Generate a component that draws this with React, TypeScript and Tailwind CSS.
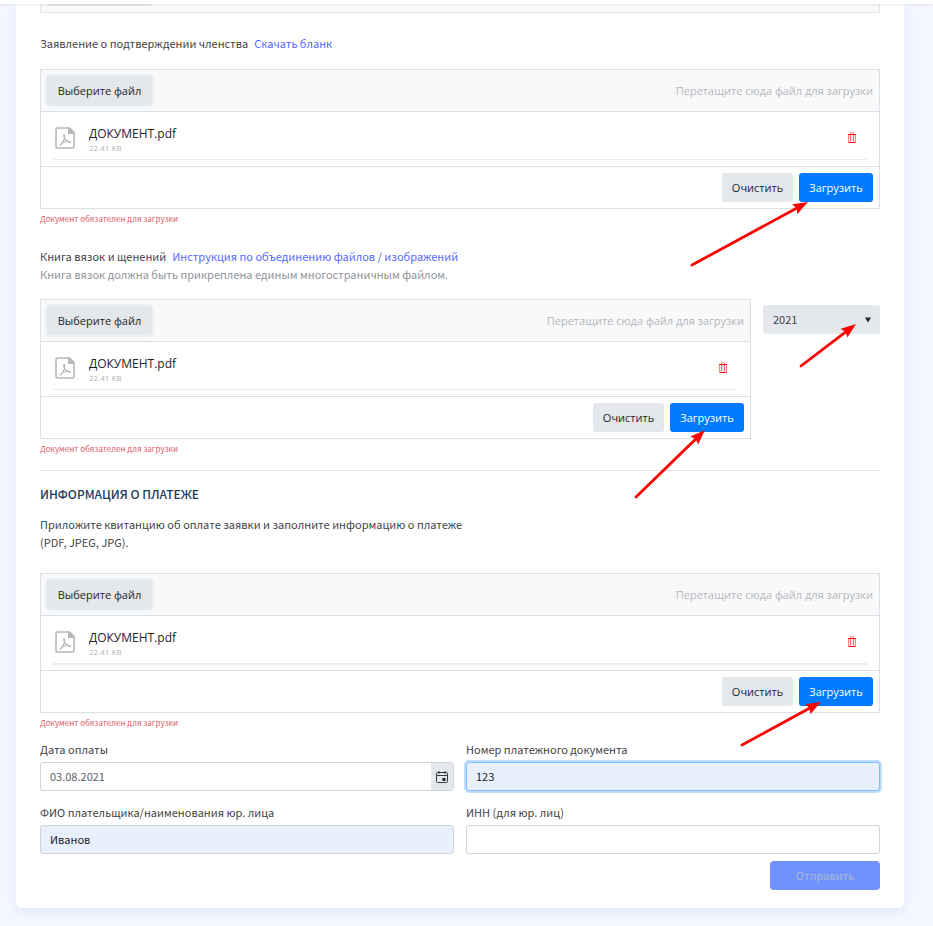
import { useRef, useState } from 'react';
import type { ReactNode } from 'react';

function PdfIcon() {
  return (
    <svg width="20" height="22" viewBox="0 0 20 22" fill="none" stroke="#b5b7ba">
      <path d="M13.500 1H2.500A1.500 1.500 0 0 0 1 2.500v17A1.500 1.500 0 0 0 2.500 21h15a1.500 1.500 0 0 0 1.500-1.500V6" strokeWidth="1.600" />
      <path d="M13 .2h1.800L19.800 5v2H13z" fill="#b5b7ba" stroke="none" />
      <path d="M8.800 7.700c1.300 0 1 1.400.7 3-.7 3-2.600 6.300-4.300 7.200 1.200-1.700 3.500-3 6-3.400 1.700-.3 3.600-.3 4.500.8-2.600-.1-6-2-6.600-5-.2-1-.7-2.400-.3-2.600z" strokeWidth="1.200" strokeLinejoin="round" />
    </svg>
  );
}

function TrashIcon() {
  return (
    <svg width="8" height="11" viewBox="0 0 8 11" fill="none">
      <path d="M1 3h6v7.500H1z" fill="#ffe0e4" />
      <path d="M2.500 2V.500h3V2" stroke="#ff9090" />
      <path d="M.5 3v7M7.500 3v7" stroke="#ff8a70" />
      <path d="M2.500 3v6M5.500 3v6" stroke="#ff6a90" />
      <path d="M0 2.500h8M.5 10.500h7" stroke="#ff0010" />
    </svg>
  );
}

function CalendarIcon() {
  return (
    <svg width="12" height="12" viewBox="0 0 12 12" fill="none" stroke="#343a40">
      <rect x=".5" y="1.500" width="11" height="10" rx="1" />
      <path d="M.5 4.500h11M3 0v3M9 0v3" />
      <rect x="6.500" y="7" width="3" height="3" fill="#212529" stroke="none" />
    </svg>
  );
}

interface ArrowProps {
  width: number;
  height: number;
  className: string;
}

// points from the bottom left corner of its box to the top right one
function Arrow({ width, height, className }: ArrowProps) {
  const angle = (Math.atan2(-height, width) * 180) / Math.PI;
  const length = Math.hypot(width, height);
  return (
    <svg
      width={width}
      height={height}
      aria-hidden="true"
      className={`pointer-events-none absolute overflow-visible ${className}`}
    >
      <g transform={`translate(${width} 0) rotate(${angle})`}>
        <line x1={-length} y1="0" x2="-10" y2="0" stroke="#ff0000" strokeWidth="2.800" strokeLinecap="round" />
        <path d="M0 0L-15 -5.500L-13 0L-15 5.500Z" fill="#ff0000" />
      </g>
    </svg>
  );
}

interface UploaderProps {
  label: string;
  thickBar?: boolean;
  children?: ReactNode;
}

function Uploader({ label, thickBar = false, children }: UploaderProps) {
  const inputRef = useRef<HTMLInputElement>(null);
  const [fileName, setFileName] = useState('ДОКУМЕНТ.pdf');

  return (
    <div className="min-w-0 flex-1">
      <div className="relative border border-[#dcdfe4] font-['Open_Sans',sans-serif] text-[11px] text-[#212529]">
        <div className="flex items-center justify-between border-b border-[#dcdfe4] bg-[#f8f9fb] p-1.5">
          <button
            type="button"
            onClick={() => inputRef.current?.click()}
            className="h-[29px] w-[105px] rounded-[3px] bg-[#e4e7eb] pt-px ring-2 ring-[#edf0f3]"
          >
            Выберите файл
          </button>
          <input
            ref={inputRef}
            type="file"
            aria-label={label}
            className="hidden"
            onChange={e => setFileName(e.target.files?.[0]?.name ?? fileName)}
          />
          <span className="pt-px text-[#b5b7b9]">Перетащите сюда файл для загрузки</span>
        </div>
        <div className="h-[55px] border-b border-[#dcdfe4] px-3 pt-3.5">
          {fileName && (
            <>
              <div className="flex h-[33px] items-start pr-[11px] pl-0.5">
                <div className="pt-px">
                  <PdfIcon />
                </div>
                <div className="ml-3.5 flex-1">
                  <p className="text-xs leading-4">{fileName}</p>
                  <p className="text-[8px] leading-3 text-[#b3b3b3]">22.41 KB</p>
                </div>
                <button type="button" aria-label="Удалить файл" onClick={() => setFileName('')} className="mt-1.5">
                  <TrashIcon />
                </button>
              </div>
              <div className={thickBar ? 'h-0.5 bg-[#e9ecef]' : 'h-px bg-[#e9ecef]'} />
            </>
          )}
        </div>
        <div className="flex justify-end gap-1.5 p-1.5">
          <button type="button" onClick={() => setFileName('')} className="h-[29px] w-[71px] rounded-[3px] bg-[#e4e7eb] pt-px">
            Очистить
          </button>
          <button type="button" className="h-[29px] w-[74px] rounded-[3px] bg-[#007bff] pt-px text-white">
            Загрузить
          </button>
        </div>
        {children}
      </div>
      <p className="mt-1 text-[8px] leading-3 text-[#dc5c66]">Документ обязателен для загрузки</p>
    </div>
  );
}

export default function App() {
  return (
    <div className="min-h-screen bg-[#f4f7ff] pb-[18px] font-['Noto_Sans_CJK_SC',sans-serif] text-[11px] leading-[18px] text-[#3f4347]">
      <header className="relative h-1 bg-white shadow-[0_1px_2px_rgba(0,0,0,0.08)]" />

      <main className="mr-[29px] ml-4 rounded-b-md bg-white px-6 pb-[18px] shadow-[0_2px_12px_rgba(80,120,255,0.14)]">
        <div className="h-[9px] border-x border-b border-[#e4e8e9] bg-[#f8faf9] px-1.5">
          <div className="h-0.5 w-[105px] rounded-b-[3px] bg-[#e4e7eb]" />
        </div>

        <p className="mt-[21px] mb-[17px]">
          Заявление о подтверждении членства
          <a href="#" className="ml-1.5 text-[#5468ff]">Скачать бланк</a>
        </p>
        <Uploader label="Заявление о подтверждении членства">
          <Arrow width={116} height={63} className="top-[132px] right-[71px]" />
        </Uploader>

        <p className="mt-[22px]">
          Книга вязок и щенений
          <a href="#" className="ml-1.5 text-[#5468ff]">Инструкция по объединению файлов / изображений</a>
        </p>
        <p className="mb-4 text-[#8f9499]">Книга вязок должна быть прикреплена единым многостраничным файлом.</p>
        <div className="flex items-start gap-3">
          <Uploader label="Книга вязок и щенений">
            <Arrow width={69} height={67} className="top-[130px] right-[45px]" />
          </Uploader>
          <div className="relative mt-1.5 w-[117px]">
            <select
              aria-label="Год"
              defaultValue="2021"
              className="block h-[29px] w-full appearance-none rounded-[3px] bg-[#e4e7eb] px-2.5 pb-0.5"
            >
              <option>2021</option>
              <option>2020</option>
              <option>2019</option>
            </select>
            <svg width="6" height="6" viewBox="0 0 6 6" className="pointer-events-none absolute top-3 right-[9px]">
              <path d="M0 .5h6L3 5.500z" fill="#212529" />
            </svg>
            <Arrow width={55} height={42} className="top-[19px] right-6" />
          </div>
        </div>

        <hr className="mt-[15px] border-[#e4e5e6]" />

        <h2 className="mt-3.5 text-xs leading-[18px] font-medium text-[#243a5a]">ИНФОРМАЦИЯ О ПЛАТЕЖЕ</h2>
        <p className="mt-3 mb-[22px]">
          Приложите квитанцию об оплате заявки и заполните информацию о платеже
          <br />
          (PDF, JPEG, JPG).
        </p>
        <Uploader label="Квитанция об оплате" thickBar>
          <Arrow width={79} height={43} className="top-[128px] right-[58px]" />
        </Uploader>

        <form onSubmit={e => e.preventDefault()}>
          <div className="mt-[11px] grid grid-cols-2 gap-x-3 gap-y-3">
            <div>
              <label htmlFor="date" className="block">Дата оплаты</label>
              <div className="mt-1 flex h-[29px] overflow-hidden rounded-[3px] border border-[#ced4da]">
                <input id="date" defaultValue="03.08.2021" className="min-w-0 flex-1 px-[9px] pb-0.5 text-[#5a6067] outline-none" />
                <button type="button" aria-label="Календарь" className="flex w-[22px] items-center justify-center bg-[#e4e7eb]">
                  <CalendarIcon />
                </button>
              </div>
            </div>
            <div>
              <label htmlFor="number" className="block">Номер платежного документа</label>
              <input
                id="number"
                defaultValue="123"
                className="mt-1 block h-[29px] w-full rounded-[3px] border border-[#80bdff] bg-[#e8effd] px-[9px] pb-0.5 text-[#212529] ring-2 ring-[#bfdeff] outline-none"
              />
            </div>
            <div>
              <label htmlFor="payer" className="block">ФИО плательщика/наименования юр. лица</label>
              <input
                id="payer"
                defaultValue="Иванов"
                className="mt-1 block h-[29px] w-full rounded-[3px] border border-[#ced4da] bg-[#e8effd] px-[9px] pb-0.5 text-[#212529] outline-none"
              />
            </div>
            <div>
              <label htmlFor="inn" className="block">ИНН (для юр. лиц)</label>
              <input
                id="inn"
                className="mt-1 block h-[29px] w-full rounded-[3px] border border-[#ced4da] px-[9px] pb-0.5 text-[#212529] outline-none"
              />
            </div>
          </div>
          <div className="mt-[7px] flex justify-end">
            <button type="submit" disabled className="h-[29px] w-[110px] rounded-sm bg-[#7092ff] pb-0.5 text-[#a9b6d3]">
              Отправить
            </button>
          </div>
        </form>
      </main>
    </div>
  );
}
